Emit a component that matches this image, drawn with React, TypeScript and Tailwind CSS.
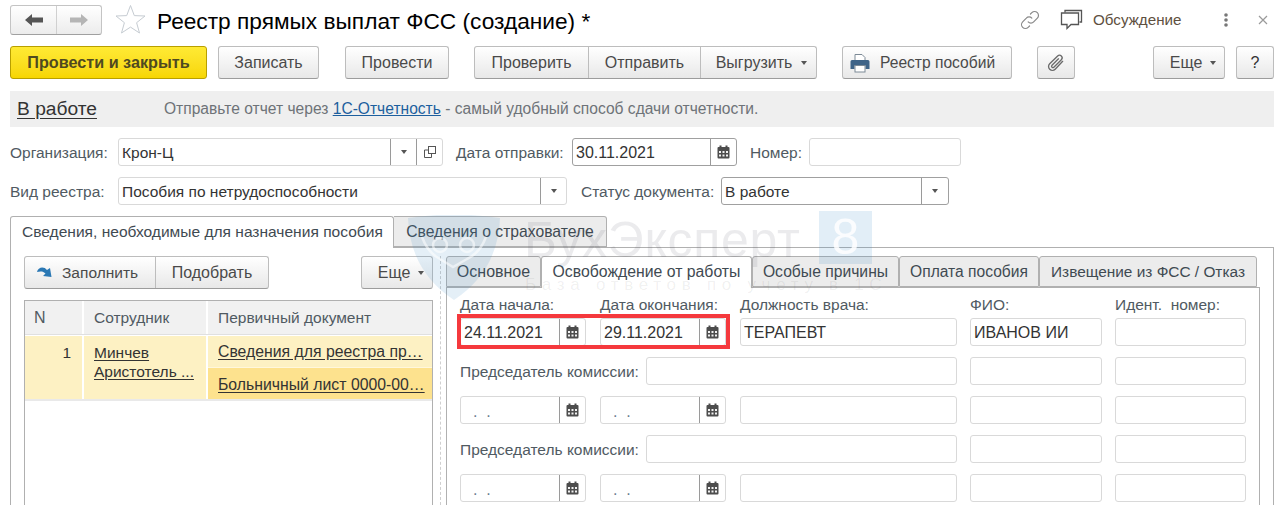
import React from "react";

const btn = "flex items-center justify-center rounded-[3px] border border-[#bdbdbd] border-b-[#9c9c9c] bg-gradient-to-b from-white to-[#e8e8e8] text-[#4a4a4a] text-[16px] h-[33px] shrink-0";

function Calendar() {
  return (
    <svg width="13" height="14" viewBox="0 0 13 14">
      <rect x="0.5" y="2" width="12" height="11.5" rx="1" fill="#4d4d4d" />
      <rect x="2.5" y="0.5" width="2" height="3" fill="#4d4d4d" />
      <rect x="8.5" y="0.5" width="2" height="3" fill="#4d4d4d" />
      <g fill="#f2f2f2">
        <rect x="2" y="6" width="2" height="2" />
        <rect x="5.5" y="6" width="2" height="2" />
        <rect x="9" y="6" width="2" height="2" />
        <rect x="2" y="9.5" width="2" height="2" />
        <rect x="5.5" y="9.5" width="2" height="2" />
        <rect x="9" y="9.5" width="2" height="2" />
      </g>
    </svg>
  );
}

function Caret() {
  return <span className="block w-0 h-0 border-l-[3.5px] border-r-[3.5px] border-t-[4px] border-l-transparent border-r-transparent border-t-[#555555]" />;
}

function DateField({ value, w, strong }: { value: string; w: string; strong?: boolean }) {
  const empty = value.startsWith(" ");
  return (
    <div className={`flex h-[28px] shrink-0 rounded-[3px] border bg-white ${strong ? "border-[#a0a0a0]" : "border-[#d9d9d9]"} ${w}`}>
      <div className={`flex-1 pl-[3px] text-[16px] leading-[28px] ${empty ? "pt-[1px] whitespace-pre text-[#6b7d8f]" : "text-[#333333]"}`}>{value}</div>
      <div className="w-[26px] border-l border-[#9a9a9a] flex items-center justify-center"><Calendar /></div>
    </div>
  );
}

function Input({ w, value }: { w: string; value?: string }) {
  return <div className={`h-[28px] shrink-0 rounded-[3px] border border-[#d9d9d9] bg-white pl-[3px] text-[16px] leading-[28px] text-[#333333] ${w}`}>{value}</div>;
}

function Select({ w, value, dividerW, strong }: { w: string; value: string; dividerW: string; strong?: boolean }) {
  return (
    <div className={`flex h-[28px] shrink-0 rounded-[3px] border bg-white ${strong ? "border-[#a0a0a0]" : "border-[#d9d9d9]"} ${w}`}>
      <div className="flex-1 pl-[3px] leading-[28px] text-[#333333]">{value}</div>
      <div className={`border-l border-[#9a9a9a] flex items-center justify-center ${dividerW}`}><Caret /></div>
    </div>
  );
}

function Select0() {
  return (
    <div className="flex h-[28px] w-[325px] shrink-0 rounded-[3px] border border-[#d9d9d9] bg-white">
      <div className="flex-1 pl-[3px] leading-[28px] text-[#333333]">Крон-Ц</div>
      <div className="w-[26px] border-l border-[#9a9a9a] flex items-center justify-center"><Caret /></div>
      <div className="w-[26px] border-l border-[#9a9a9a] flex items-center justify-center">
        <svg width="12" height="12" viewBox="0 0 12 12" fill="none" stroke="#555555"><rect x="4.5" y="0.5" width="7" height="7" /><path d="M4.5 4 H.5 V11.5 H7.5 V7.5" /></svg>
      </div>
    </div>
  );
}

function InnerTab({ children, w, active, size }: { children: React.ReactNode; w: string; active?: boolean; size: string }) {
  return (
    <div className={`shrink-0 rounded-t-[3px] border border-[#b0b0b0] text-center leading-[30px] text-[#3f4a52] whitespace-nowrap ${active ? "h-[32px] border-b-0 bg-white relative z-10" : "h-[31px] bg-[#ececec]"} ${size} ${w}`}>
      {children}
    </div>
  );
}

function DateRow() {
  return (
    <div className="flex mt-[11px] h-[28px] gap-[14px]">
      <DateField value="  .  ." w="w-[126px]" />
      <DateField value="  .  ." w="w-[126px]" />
      <Input w="w-[217px]" />
      <div className="flex gap-[13px] -ml-[1px]">
        <Input w="w-[132px]" />
        <Input w="w-[131px]" />
      </div>
    </div>
  );
}

function ChairRow() {
  return (
    <div className="flex mt-[11px] h-[28px]">
      <div className="w-[186px] shrink-0 leading-[29px] text-[#505a62] whitespace-nowrap">Председатель комиссии:</div>
      <Input w="w-[311px]" />
      <div className="flex gap-[13px] ml-[13px]">
        <Input w="w-[132px]" />
        <Input w="w-[131px]" />
      </div>
    </div>
  );
}

export default function App() {
  return (
    <div className="relative w-[1280px] h-[505px] overflow-hidden bg-white text-[15.5px] text-[#4a4a4a]" style={{ fontFamily: '"Liberation Sans", Arial, sans-serif' }}>
      <div className="pl-[10px]">
        {/* title row */}
        <div className="flex h-[46px] pt-[5px]">
          <div className="flex w-[92px] h-[30px] shrink-0 rounded-[3px] border border-[#c4c4c4] border-b-[#a0a0a0] bg-gradient-to-b from-white to-[#ececec]">
            <div className="w-[46px] flex items-center justify-center border-r border-[#d0d0d0]">
              <svg width="18" height="12" viewBox="0 0 18 12"><path d="M0 6 L7 0 V3.5 H18 V8.5 H7 V12Z" fill="#555555" /></svg>
            </div>
            <div className="flex-1 flex items-center justify-center">
              <svg width="18" height="12" viewBox="0 0 18 12"><path d="M18 6 L11 0 V3.5 H0 V8.5 H11 V12Z" fill="#b5b5b5" /></svg>
            </div>
          </div>
          <svg className="ml-[13px] -mt-[1px] shrink-0" width="31" height="30" viewBox="0 0 31 30">
            <path d="M15.5 1.5 L19.3 11.6 L30 12 L21.6 18.7 L24.5 29 L15.5 23.1 L6.5 29 L9.4 18.7 L1 12 L11.7 11.6Z" fill="#fff" stroke="#c6ccd2" strokeWidth="1" />
          </svg>
          <div className="ml-[11px] text-[22.7px] leading-[32px] text-black whitespace-nowrap">Реестр прямых выплат ФСС (создание) *</div>
          <div className="ml-auto flex items-center h-[32px] pr-[12px] -mt-[1px]">
            <svg className="shrink-0" width="22" height="22" viewBox="0 0 24 24" fill="none" stroke="#8a8a8a" strokeWidth="1.3" strokeLinecap="round">
              <path d="M10 14 a4 4 0 0 0 6 0 l4-4 a4 4 0 0 0-6-6 l-1.5 1.5" />
              <path d="M14 10 a4 4 0 0 0-6 0 l-4 4 a4 4 0 0 0 6 6 l1.5-1.5" />
            </svg>
            <svg className="ml-[19px] shrink-0" width="24" height="22" viewBox="0 0 24 22" fill="none" stroke="#555555" strokeWidth="1.3">
              <path d="M5 3.5 V1.5 H21.5 V13 H19.5" />
              <path d="M1.5 4 H18.5 V15.5 H11 L7 19.5 V15.5 H1.5Z" fill="#fff" />
            </svg>
            <span className="ml-[9px] text-[15.2px] text-[#5e5040] w-[95px] whitespace-nowrap">Обсуждение</span>
            <svg className="ml-[35px] shrink-0" width="6" height="16" viewBox="0 0 6 16" fill="#777777">
              <circle cx="3" cy="3" r="1.8" /><circle cx="3" cy="8" r="1.8" /><circle cx="3" cy="13" r="1.8" />
            </svg>
            <svg className="ml-[29px] shrink-0" width="10" height="10" viewBox="0 0 10 10" stroke="#9a9a9a" strokeWidth="1.2"><path d="M1 1 L9 9 M9 1 L1 9" /></svg>
          </div>
        </div>

        {/* command bar */}
        <div className="flex">
          <div className="flex items-center justify-center w-[197px] h-[33px] shrink-0 rounded-[3px] border border-[#b89f00] bg-gradient-to-b from-[#ffea33] to-[#f7d600] font-bold text-[16.2px] text-[#4f4a20]">Провести и закрыть</div>
          <div className={`${btn} w-[101px] ml-[11px]`}>Записать</div>
          <div className={`${btn} w-[104px] ml-[26px]`}>Провести</div>
          <div className={`${btn} w-[343px] ml-[25px] justify-start`}>
            <div className="w-[114px] h-full flex items-center justify-center border-r border-[#bdbdbd]">Проверить</div>
            <div className="w-[112px] h-full flex items-center justify-center border-r border-[#bdbdbd]">Отправить</div>
            <div className="flex-1 h-full flex items-center justify-center gap-[9px] pl-[6px]">Выгрузить<Caret /></div>
          </div>
          <div className={`${btn} w-[170px] ml-[25px] gap-[10px] justify-start pl-[7px]`}>
            <svg width="20" height="20" viewBox="0 0 20 20">
              <path d="M5 1.5 H12 L15 4.5 V9 H5Z" fill="#fff" stroke="#7c8a96" />
              <path d="M2 7 H18 a1.5 1.5 0 0 1 1.5 1.5 V16 H15.5 V12.5 H4.5 V16 H.5 V8.5 A1.5 1.5 0 0 1 2 7Z" fill="#3f6488" />
              <rect x="5" y="12.5" width="10" height="6.5" fill="#fff" stroke="#7c8a96" />
            </svg>
            <span className="text-[15.6px]">Реестр пособий</span>
          </div>
          <div className={`${btn} w-[38px] ml-[25px]`}>
            <svg width="20" height="20" viewBox="0 0 24 24" fill="none" stroke="#6a6a6a" strokeWidth="1.6" strokeLinecap="round">
              <path d="M20 10 L11 19.5 a4.6 4.6 0 0 1-6.6-6.5 L14 3.6 a3.1 3.1 0 0 1 4.4 4.4 L9.4 17 a1.5 1.5 0 0 1-2.2-2.2 L15 7" />
            </svg>
          </div>
          <div className={`${btn} w-[72px] ml-[78px] gap-[8px] pl-[8px]`}>Еще<Caret /></div>
          <div className={`${btn} w-[38px] ml-[11px]`}><span className="text-[#333333]">?</span></div>
        </div>

        {/* status bar */}
        <div className="flex items-center w-[1264px] h-[36px] mt-[12px] bg-[#efefef]">
          <span className="ml-[7px] text-[19.2px] text-[#333333] underline underline-offset-[3px] whitespace-nowrap">В работе</span>
          <span className="ml-[67px] text-[15.6px] text-[#6e7378] whitespace-nowrap">Отправьте отчет через <span className="text-[#1d5f9e] underline">1С-Отчетность</span> - самый удобный способ сдачи отчетности.</span>
        </div>

        {/* form row 1 */}
        <div className="flex mt-[11px] h-[28px] leading-[29px]">
          <div className="w-[108px] shrink-0 text-[#505a62]">Организация:</div>
          <Select0 />
          <div className="ml-[13px] w-[116px] shrink-0 text-[#505a62] whitespace-nowrap">Дата отправки:</div>
          <DateField value="30.11.2021" w="w-[165px]" strong />
          <div className="ml-[13px] w-[59px] shrink-0 text-[#505a62]">Номер:</div>
          <Input w="w-[152px]" />
        </div>

        {/* form row 2 */}
        <div className="flex mt-[11px] h-[28px] leading-[29px]">
          <div className="w-[108px] shrink-0 text-[#505a62]">Вид реестра:</div>
          <Select w="w-[449px]" value="Пособия по нетрудоспособности" dividerW="w-[26px]" />
          <div className="ml-[14px] w-[140px] shrink-0 text-[#505a62] whitespace-nowrap">Статус документа:</div>
          <Select w="w-[228px]" value="В работе" dividerW="w-[27px]" strong />
        </div>

        {/* outer tabs */}
        <div className="flex mt-[11px] h-[31px] relative">
          <div className="w-[384px] h-[32px] rounded-t-[3px] border border-b-0 border-[#b0b0b0] bg-white pl-[11px] leading-[30px] text-[15.55px] text-[#3f4a52] relative z-10 whitespace-nowrap">Сведения, необходимые для назначения пособия</div>
          <div className="w-[213px] h-[31px] rounded-tr-[3px] border border-l-0 border-[#b0b0b0] bg-[#ececec] text-center leading-[30px] text-[15.7px] text-[#3f4a52] whitespace-nowrap">Сведения о страхователе</div>
        </div>

        {/* outer panel */}
        <div className="flex w-[1264px] h-[258px] border-t border-l border-r border-[#b0b0b0]">
          {/* left */}
          <div className="w-[423px] shrink-0 pl-[13px] pt-[8px]">
            <div className="flex w-[409px]">
              <div className={`${btn} w-[245px] justify-start`}>
                <div className="w-[131px] h-full flex items-center gap-[9px] pl-[11px] border-r border-[#bdbdbd] text-[15.5px]">
                  <svg width="17" height="15" viewBox="0 0 17 15"><path d="M1 7 C2 2 8 1 11 5 L14 3 L15.5 12 L7 11 L9.5 8.5 C7.5 6 4 6 1 7Z" fill="#2a78b4" /></svg>
                  Заполнить
                </div>
                <div className="flex-1 h-full flex items-center justify-center">Подобрать</div>
              </div>
              <div className={`${btn} w-[72px] ml-auto gap-[8px] pl-[8px]`}>Еще<Caret /></div>
            </div>
            <div className="w-[409px] h-[240px] mt-[11px] border border-b-0 border-[#b0b0b0] bg-white">
              <div className="flex h-[34px] text-[#505a62] bg-[#f1f1f1] border-b border-[#e0e0e0] leading-[33px]">
                <div className="w-[59px] pl-[9px] border-r-2 border-white text-[16px]">N</div>
                <div className="w-[124px] pl-[10px] border-r-2 border-white">Сотрудник</div>
                <div className="flex-1 pl-[10px]">Первичный документ</div>
              </div>
              <div className="flex h-[66px] border-t border-white border-b-2 border-b-[#e9e9e9] bg-[#fdf1c3] text-[#333333]">
                <div className="w-[59px] pr-[11px] pt-[5px] text-right border-r-2 border-white leading-[24px]">1</div>
                <div className="w-[124px] pl-[10px] pt-[7px] border-r-2 border-white leading-[19px] underline underline-offset-2 whitespace-nowrap">Минчев <br />Аристотель ...</div>
                <div className="flex-1 flex flex-col text-[15.8px]">
                  <div className="h-[32px] pl-[10px] leading-[31px] underline underline-offset-2 border-b border-[#fff7dc] whitespace-nowrap">Сведения для реестра пр…</div>
                  <div className="h-[31px] overflow-hidden pl-[10px] bg-[#fde28e] leading-[33px] underline underline-offset-2 whitespace-nowrap">Больничный лист 0000-00…</div>
                </div>
              </div>
            </div>
          </div>

          {/* splitter */}
          <div className="w-[12px] shrink-0 flex justify-center pt-[8px]">
            <div className="w-0 h-full border-l border-dashed border-[#cfcfcf]" />
          </div>

          {/* right */}
          <div className="w-[814px] shrink-0 pt-[8px]">
            <div className="flex h-[31px]">
              <InnerTab w="w-[95px]" size="text-[16px]">Основное</InnerTab>
              <InnerTab w="w-[211px]" size="text-[15.8px]" active>Освобождение от работы</InnerTab>
              <InnerTab w="w-[147px]" size="text-[15.7px]">Особые причины</InnerTab>
              <InnerTab w="w-[140px]" size="text-[15.6px]">Оплата пособия</InnerTab>
              <InnerTab w="w-[218px]" size="text-[15.4px]">Извещение из ФСС / Отказ</InnerTab>
            </div>
            <div className="h-[220px] border-t border-l border-r border-[#b0b0b0] pl-[13px] pt-[8px]">
              <div className="flex h-[22px] leading-[18px] text-[#505a62] whitespace-nowrap">
                <div className="w-[140px]">Дата начала:</div>
                <div className="w-[140px]">Дата окончания:</div>
                <div className="w-[230px]">Должность врача:</div>
                <div className="w-[145px]">ФИО:</div>
                <div className="whitespace-pre">Идент.  номер:</div>
              </div>
              <div className="flex gap-[14px]">
                <DateField value="24.11.2021" w="w-[126px]" />
                <DateField value="29.11.2021" w="w-[126px]" />
                <Input w="w-[217px]" value="ТЕРАПЕВТ" />
                <div className="flex gap-[13px] -ml-[1px]">
                  <Input w="w-[132px]" value="ИВАНОВ ИИ" />
                  <Input w="w-[131px]" />
                </div>
              </div>
              <ChairRow />
              <DateRow />
              <ChairRow />
              <DateRow />
            </div>
          </div>
        </div>
      </div>

      {/* red highlight */}
      <div className="absolute left-[457px] top-[314px] w-[273px] h-[35px] border-[4px] border-[#f5393d] z-20" />

      {/* watermark over the form */}
      <div className="absolute left-[408px] top-[210px] w-[480px] h-[100px] z-30 pointer-events-none">
        <svg className="absolute left-0 top-[5px]" width="92" height="85" viewBox="0 0 92 85">
          <path d="M0 3 Q46 -4 92 3 Q90 56 46 85 Q2 56 0 3Z" fill="#3d8fc9" fillOpacity="0.14" />
          <g fill="none" stroke="#fff" strokeOpacity="0.55" strokeWidth="2.5">
            <circle cx="32" cy="30" r="7" />
            <circle cx="59" cy="30" r="7" />
            <path d="M14 22 Q20 38 32 44 L45 52 L59 44 Q72 38 78 22" />
          </g>
        </svg>
        <div className="absolute left-[116px] top-0 text-[50px] leading-[60px] tracking-[0.7px] text-[#3a3a4a]/10 whitespace-nowrap">БухЭксперт</div>
        <div className="absolute left-[411px] top-[1px] w-[53px] h-[53px] bg-[#3d8fc9]/15 text-white/85 text-[50px] leading-[53px] text-center">8</div>
        <div className="absolute left-[117px] top-[65px] text-[17px] leading-[20px] tracking-[5.7px] text-[#3a3a3a]/8 whitespace-nowrap">База ответов по учету в 1С</div>
      </div>
    </div>
  );
}
